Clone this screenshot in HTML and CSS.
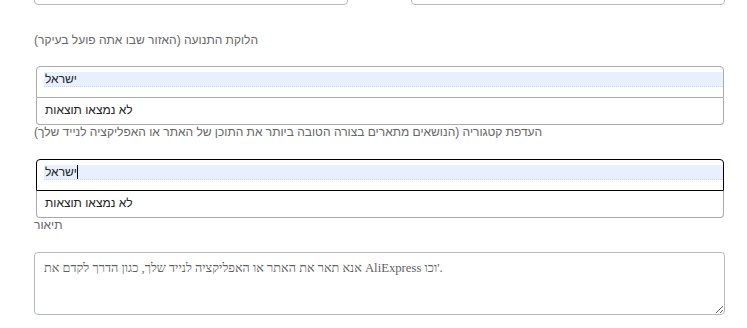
FILE: index.html
```html
<!DOCTYPE html>
<html lang="he">
<head>
  <meta charset="UTF-8">
  <meta name="viewport" content="width=device-width, initial-scale=1.0">
  <title>פרטי האתר</title>
  <link rel="stylesheet" href="styles.css">
</head>
<body>
  <main class="form">

    <div class="linha-topo">
      <input type="text" class="campo">
      <input type="text" class="campo">
    </div>

    <label class="rotulo rotulo-primeiro">הלוקת התנועה (האזור שבו אתה פועל בעיקר)</label>
    <div class="combo">
      <div class="combo-campo">
        <div class="combo-valor">ישראל</div>
      </div>
      <div class="combo-resultados">לא נמצאו תוצאות</div>
    </div>

    <label class="rotulo">העדפת קטגוריה (הנושאים מתארים בצורה הטובה ביותר את התוכן של האתר או האפליקציה לנייד שלך)</label>
    <div class="combo combo-foco">
      <div class="combo-campo">
        <div class="combo-valor"><span>ישראל</span><span class="cursor"></span></div>
      </div>
      <div class="combo-resultados">לא נמצאו תוצאות</div>
    </div>

    <label class="rotulo" for="descricao">תיאור</label>
    <textarea id="descricao" class="descricao">אנא תאר את האתר או האפליקציה לנייד שלך, כגון הדרך לקדם את AliExpress וכו'.</textarea>

  </main>
</body>
</html>
```

FILE: styles.css
```css
* {
  box-sizing: border-box;
  margin: 0;
}

body {
  background-color: white;
  font-family: "Liberation Sans", Arial, sans-serif;
  color: rgb(34, 34, 34);
}

.form {
  display: flex;
  flex-direction: column;
  padding: 0 22px 0 34px;
}

.linha-topo {
  display: grid;
  grid-template-columns: 1fr 1fr;
  gap: 63px;
  margin-top: -31px;
}

.campo {
  height: 36px;
  border: 1px solid rgb(179, 185, 196);
  border-radius: 4px;
  outline: none;
}

.rotulo {
  display: block;
  font-size: 12px;
  line-height: 14px;
  color: rgb(102, 102, 102);
}

.rotulo-primeiro {
  margin-top: 28px;
}

.combo {
  margin: 19px 1px 0 2px;
}

.combo-foco {
  margin-top: 20px;
}

.combo-campo {
  height: 32px;
  padding: 5px 0 0 7px;
  border: 1px solid rgb(170, 170, 170);
  border-radius: 4px 4px 0 0;
}

.combo-foco .combo-campo {
  border-color: black;
}

.combo-valor {
  display: flex;
  align-items: center;
  height: 15px;
  padding-left: 1px;
  font-size: 12px;
  line-height: 14px;
  background-color: rgb(232, 240, 254);
  border-bottom: 1px dotted rgb(205, 214, 232);
}

.cursor {
  display: inline-block;
  width: 1px;
  height: 14px;
  background-color: black;
}

.combo-resultados {
  height: 27px;
  padding-left: 8px;
  font-size: 12px;
  line-height: 25px;
  border: 1px solid rgb(170, 170, 170);
  border-top: none;
  border-radius: 0 0 4px 4px;
}

.descricao {
  margin-top: 20px;
  height: 63px;
  padding: 8px 9px;
  font-family: "Liberation Serif", "Times New Roman", serif;
  font-size: 12.7px;
  line-height: 15px;
  color: rgb(95, 95, 95);
  border: 1px solid rgb(179, 185, 196);
  border-radius: 4px;
  outline: none;
}
```
